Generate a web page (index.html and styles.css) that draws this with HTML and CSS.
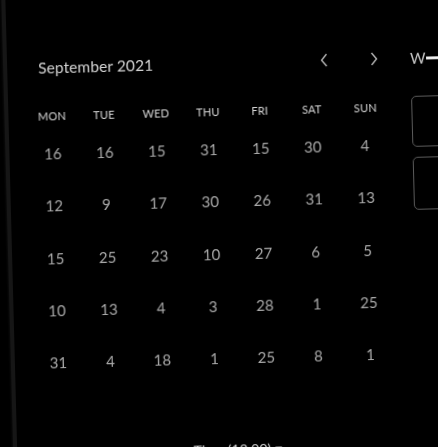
FILE: index.html
```html
<!DOCTYPE html>
<html>
<head>
<meta charset="utf-8">
<link rel="stylesheet" href="styles.css">
</head>
<body>
<div class="frame">
  <div class="stage">
    <div class="panel">
      <div class="calendar">
        <div class="cal-head">
          <div class="title">September 2021</div>
          <div class="nav">
            <svg class="chev" width="8" height="14" viewBox="0 0 8 14"><path d="M6.5 1 L1.5 7 L6.5 13" fill="none" stroke="#b5b5b5" stroke-width="1.4"/></svg>
            <svg class="chev" width="8" height="14" viewBox="0 0 8 14"><path d="M1.5 1 L6.5 7 L1.5 13" fill="none" stroke="#b5b5b5" stroke-width="1.4"/></svg>
          </div>
        </div>
        <div class="grid">
          <div class="dow">MON</div><div class="dow">TUE</div><div class="dow">WED</div><div class="dow">THU</div><div class="dow">FRI</div><div class="dow">SAT</div><div class="dow">SUN</div>
          <div class="day">16</div><div class="day">16</div><div class="day">15</div><div class="day">31</div><div class="day">15</div><div class="day">30</div><div class="day">4</div>
          <div class="day">12</div><div class="day">9</div><div class="day">17</div><div class="day">30</div><div class="day">26</div><div class="day">31</div><div class="day">13</div>
          <div class="day">15</div><div class="day">25</div><div class="day">23</div><div class="day">10</div><div class="day">27</div><div class="day">6</div><div class="day">5</div>
          <div class="day">10</div><div class="day">13</div><div class="day">4</div><div class="day">3</div><div class="day">28</div><div class="day">1</div><div class="day">25</div>
          <div class="day">31</div><div class="day">4</div><div class="day">18</div><div class="day">1</div><div class="day">25</div><div class="day">8</div><div class="day">1</div>
        </div>
        <div class="footer">
          <span class="foot-icon"></span>
          <span class="time">Time (12:00) <span class="caret">▾</span></span>
        </div>
      </div>
      <div class="side">
        <div class="tab"><span class="tab-w">W</span><span class="tab-bar"></span></div>
        <div class="box"></div>
        <div class="box tall"></div>
      </div>
    </div>
  </div>
</div>
</body>
</html>
```
FILE: styles.css
```css
html, body {
  margin: 0;
  padding: 0;
  background: #000;
}
.frame {
  width: 438px;
  height: 447px;
  overflow: hidden;
  background: #000;
}
.stage {
  width: 438px;
  height: 470px;
  transform: rotate(-1.5deg);
  transform-origin: 219px 223.5px;
  font-family: Lato, "Open Sans", sans-serif;
  margin-top: -12px;
  padding-top: 12px;
  box-sizing: border-box;
  filter: blur(0.25px);
}
.panel {
  margin-left: 7px;
  margin-top: -12px;
  padding-top: 12px;
  height: 490px;
  border-left: 4px solid #161616;
  box-shadow: -1px 0 2px #0c0c0c;
  display: flex;
  box-sizing: border-box;
}
.calendar {
  width: 385px;
  padding-left: 17.5px;
  box-sizing: border-box;
  flex: none;
}
.cal-head {
  display: flex;
  align-items: center;
  height: 20px;
  margin-top: 53px;
}
.title {
  margin-left: 13.5px;
  font-size: 15.5px;
  color: #d4d4d4;
  letter-spacing: 0.1px;
}
.nav {
  margin-left: auto;
  margin-right: 14px;
  display: flex;
  gap: 42px;
  align-items: center;
}
.chev { display: block; }
.grid {
  margin-top: 30.7px;
  display: grid;
  grid-template-columns: repeat(7, 52px);
  grid-template-rows: 19px repeat(5, 52.4px);
}
.dow {
  font-size: 11px;
  line-height: 16px;
  height: 16px;
  color: #d6d6d6;
  text-align: center;
  letter-spacing: 0.2px;
}
.dow:nth-child(7) { padding-left: 3px; }
.day {
  display: flex;
  align-items: center;
  justify-content: center;
  font-size: 15px;
  color: #a9a9a9;
}
.footer {
  margin-top: 56px;
  height: 18px;
  display: flex;
  align-items: center;
  font-size: 14px;
  color: #d0d0d0;
}
.foot-icon {
  width: 8px;
  height: 8px;
  border-radius: 50%;
  border: 1px solid #444;
  margin-left: 24px;
}
.time {
  margin-left: 125px;
}
.caret { color: #bbb; }
.side {
  margin-left: 18px;
  padding-top: 53px;
  flex: none;
  width: 60px;
}
.tab {
  display: flex;
  align-items: center;
  height: 20px;
}
.tab-w {
  font-size: 15px;
  color: #c4c4c4;
}
.tab-bar {
  width: 30px;
  height: 3px;
  background: linear-gradient(#cfcfcf, #fafafa, #cfcfcf);
}
.box {
  margin-top: 28px;
  width: 40px;
  height: 51px;
  border: 1.2px solid #5a5a5a;
  border-radius: 5px;
  box-sizing: border-box;
}
.box.tall {
  margin-top: 10px;
  height: 53px;
}
```
